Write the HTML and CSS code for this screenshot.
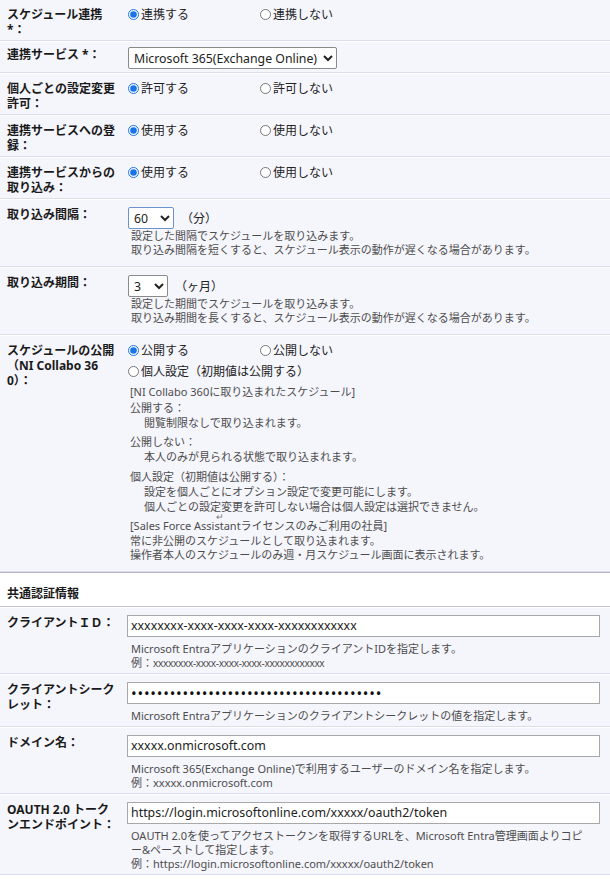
FILE: index.html
```html
<!DOCTYPE html>
<html lang="ja">
<head>
<meta charset="utf-8">
<title>スケジュール連携設定</title>
<link rel="stylesheet" href="styles.css">
</head>
<body>
<div class="form">
  <div class="row">
    <div class="label">スケジュール連携 *：</div>
    <div class="value">
      <label class="opt"><input type="radio" name="r1" checked>連携する</label><label class="opt"><input type="radio" name="r1">連携しない</label>
    </div>
  </div>
  <div class="row row-sel">
    <div class="label">連携サービス *：</div>
    <div class="value">
      <select class="sel sel-service"><option>Microsoft 365(Exchange Online)</option></select>
    </div>
  </div>
  <div class="row">
    <div class="label">個人ごとの設定変更許可：</div>
    <div class="value">
      <label class="opt"><input type="radio" name="r2" checked>許可する</label><label class="opt"><input type="radio" name="r2">許可しない</label>
    </div>
  </div>
  <div class="row">
    <div class="label">連携サービスへの登録：</div>
    <div class="value">
      <label class="opt"><input type="radio" name="r3" checked>使用する</label><label class="opt"><input type="radio" name="r3">使用しない</label>
    </div>
  </div>
  <div class="row">
    <div class="label">連携サービスからの取り込み：</div>
    <div class="value">
      <label class="opt"><input type="radio" name="r4" checked>使用する</label><label class="opt"><input type="radio" name="r4">使用しない</label>
    </div>
  </div>
  <div class="row">
    <div class="label">取り込み間隔：</div>
    <div class="value">
      <div class="line"><select class="sel sel-small sel-focus"><option>60</option></select><span class="unit">（分）</span></div>
      <div class="help help-after-sel">設定した間隔でスケジュールを取り込みます。<br>取り込み間隔を短くすると、スケジュール表示の動作が遅くなる場合があります。</div>
    </div>
  </div>
  <div class="row">
    <div class="label">取り込み期間：</div>
    <div class="value">
      <div class="line"><select class="sel sel-tiny"><option>3</option></select><span class="unit">（ヶ月）</span></div>
      <div class="help help-after-sel">設定した期間でスケジュールを取り込みます。<br>取り込み期間を長くすると、スケジュール表示の動作が遅くなる場合があります。</div>
    </div>
  </div>
  <div class="row">
    <div class="label">スケジュールの公開（NI Collabo 360）：</div>
    <div class="value">
      <div><label class="opt"><input type="radio" name="r5" checked>公開する</label><label class="opt"><input type="radio" name="r5">公開しない</label></div>
      <div class="opt-line"><label><input type="radio" name="r5">個人設定（初期値は公開する）</label></div>
      <div class="desc">
        <p class="head">[NI Collabo 360に取り込まれたスケジュール]</p>
        <p class="grp grp-1">公開する：<br><span class="ind">閲覧制限なしで取り込まれます。</span></p>
        <p class="grp grp-2">公開しない：<br><span class="ind">本人のみが見られる状態で取り込まれます。</span></p>
        <p class="grp grp-3">個人設定（初期値は公開する）：<br><span class="ind">設定を個人ごとにオプション設定で変更可能にします。</span><br><span class="ind">個人ごとの設定変更を許可しない場合は個人設定は選択できません。</span></p>
        <p class="grp grp-4"><span class="ret">↵</span>[Sales Force Assistantライセンスのみご利用の社員]<br>常に非公開のスケジュールとして取り込まれます。<br>操作者本人のスケジュールのみ週・月スケジュール画面に表示されます。</p>
      </div>
    </div>
  </div>
  <div class="section">共通認証情報</div>
  <div class="row">
    <div class="label">クライアントＩＤ：</div>
    <div class="value">
      <input class="text" type="text" value="xxxxxxxx-xxxx-xxxx-xxxx-xxxxxxxxxxxx">
      <div class="help">Microsoft Entraアプリケーションのクライアント<span class="id">ID</span>を指定します。<br>例：<span class="ex">xxxxxxxx-xxxx-xxxx-xxxx-xxxxxxxxxxxx</span></div>
    </div>
  </div>
  <div class="row">
    <div class="label">クライアントシークレット：</div>
    <div class="value">
      <input class="text pass" type="password" value="xxxxxxxxxxxxxxxxxxxxxxxxxxxxxxxxxxxxxxx">
      <div class="help">Microsoft Entraアプリケーションのクライアントシークレットの値を指定します。</div>
    </div>
  </div>
  <div class="row">
    <div class="label">ドメイン名：</div>
    <div class="value">
      <input class="text" type="text" value="xxxxx.onmicrosoft.com">
      <div class="help">Microsoft 365(Exchange Online)で利用するユーザーのドメイン名を指定します。<br>例：xxxxx.onmicrosoft.com</div>
    </div>
  </div>
  <div class="row">
    <div class="label">OAUTH 2.0 トークンエンドポイント：</div>
    <div class="value">
      <input class="text" type="text" value="https://login.microsoftonline.com/xxxxx/oauth2/token">
      <div class="help help-wrap">OAUTH 2.0を使ってアクセストークンを取得するURLを、Microsoft Entra管理画面よりコピー&amp;ペーストして指定します。<br>例：https://login.microsoftonline.com/xxxxx/oauth2/token</div>
    </div>
  </div>
</div>
</body>
</html>
```

FILE: styles.css
```css
html, body {
  margin: 0;
  padding: 0;
  background: #ffffff;
}
body {
  font-family: "Noto Sans", "Noto Sans CJK JP", sans-serif;
  font-size: 12px;
  color: #222;
  width: 610px;
  height: 879px;
  overflow: hidden;
}
.form {
  margin-top: -1px;
}
.row {
  display: flex;
  background: #f5f5fc;
  border-top: 1px solid #ffffff;
  border-bottom: 1px solid #dcdcef;
}
.label {
  width: 109px;
  flex: none;
  padding: 7px 4px 3px 7px;
  font-weight: bold;
  line-height: 15px;
  word-break: break-all;
  color: #1a1a1a;
}
.value {
  flex: 1;
  min-width: 0;
  padding: 7px 9px 3px 8px;
  line-height: 15px;
}
.row-sel .label,
.row-sel .value {
  padding-top: 5px;
  padding-bottom: 3px;
}
.opt {
  display: inline-block;
  width: 132px;
  white-space: nowrap;
}
input[type="radio"] {
  width: 11px;
  height: 11px;
  margin: 0 2px 0 0;
  vertical-align: -1px;
  accent-color: #1a73e8;
}
.opt-line {
  margin-top: 6px;
}
.sel {
  font-family: "Noto Sans", "Noto Sans CJK JP", sans-serif;
  font-size: 12.3px;
  height: 22px;
  color: #222;
  background: #fff;
  border: 1px solid #8a8a8a;
  border-radius: 2px;
  padding: 0 1px;
  vertical-align: middle;
}
.sel-service {
  width: 209px;
  display: block;
}
.sel-small {
  width: 46px;
}
.sel-tiny {
  width: 40px;
}
.sel-focus {
  border-color: #6b93cf;
}
.line {
  height: 22px;
  display: flex;
  align-items: center;
}
.unit {
  margin-left: 7px;
  font-size: 12px;
}
.help {
  font-size: 11px;
  color: #4d4d4d;
  line-height: 14px;
  padding-left: 3px;
  margin-top: 5px;
  margin-bottom: 0;
  line-break: loose;
}
.help-after-sel {
  margin-top: 0;
  margin-bottom: 6px;
}
.help-wrap {
  padding-right: 14px;
}
.help .ex {
  font-size: 10px;
  letter-spacing: -0.3px;
}
.desc {
  position: relative;
  font-size: 11px;
  color: #4d4d4d;
  line-height: 15px;
  padding-left: 2px;
  margin-top: 5px;
  margin-bottom: 5px;
}
.desc p {
  margin: 0;
}
.desc .grp-1 {
  margin-top: 1px;
}
.desc .grp-2 {
  margin-top: 4px;
}
.desc .grp-3 {
  margin-top: 5px;
}
.desc .grp-4 {
  margin-top: 5px;
  line-height: 14.5px;
  position: relative;
}
.ind {
  padding-left: 14px;
}
.ret {
  position: absolute;
  left: 86px;
  top: -7px;
  font-size: 9px;
  line-height: 9px;
  color: #777;
}
.section {
  background: #ffffff;
  border-top: 1px solid #b4b4c6;
  border-bottom: 1px solid #c4c4d6;
  font-weight: bold;
  padding: 13px 7px 5px;
  line-height: 15px;
  color: #1a1a1a;
}
.text {
  display: block;
  box-sizing: border-box;
  width: 100%;
  height: 22px;
  margin: 0 0 0 -1px;
  padding: 0 3px;
  font-family: "Noto Sans", "Noto Sans CJK JP", sans-serif;
  font-size: 12.4px;
  color: #222;
  background: #fff;
  border: 1px solid #a8a8a8;
  border-radius: 0;
}
.pass {
  font-size: 15px;
  letter-spacing: 0.8px;
  color: #111;
}
```
